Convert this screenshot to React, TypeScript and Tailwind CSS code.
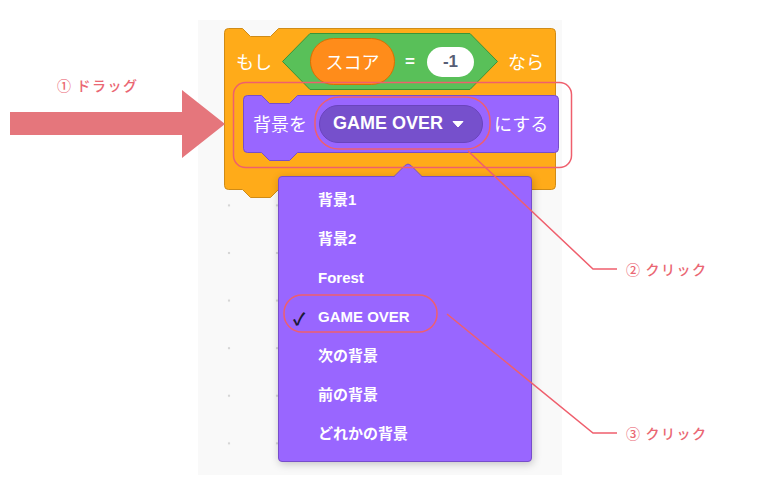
import React from 'react';

const jp = "font-['Noto_Sans_CJK_JP',sans-serif]";
const latin = "font-['Liberation_Sans','Noto_Sans_CJK_JP',sans-serif]";

const menuItems = ['背景1', '背景2', 'Forest', 'GAME OVER', '次の背景', '前の背景', 'どれかの背景'];

// orange "if" C-block and the purple "switch backdrop" block inside it
const BlockShapes: React.FC = () => (
  <svg className="absolute inset-0" width="340" height="172" viewBox="0 0 340 172">
    <path
      d="M0.5,4.5 Q0.5,0.5 4.5,0.5 H18.5 L26.5,8.5 H46.5 L54.5,0.5 H327.5 Q331.5,0.5 331.5,4.5 V157.5 Q331.5,161.5 327.5,161.5 H54.5 L46.5,169.5 H26.5 L18.5,161.5 H4.5 Q0.5,161.5 0.5,157.5 Z"
      fill="#ffab19"
      stroke="#cf8b17"
    />
    <path
      d="M19.5,71.5 Q19.5,67.5 23.5,67.5 H37.5 L45.5,75.5 H65.5 L73.5,67.5 H330.5 Q334.5,67.5 334.5,71.5 V120.5 Q334.5,124.5 330.5,124.5 H73.5 L65.5,132.5 H45.5 L37.5,124.5 H23.5 Q19.5,124.5 19.5,120.5 Z"
      fill="#9966ff"
      stroke="#774dcb"
    />
  </svg>
);

const Condition: React.FC = () => (
  <div className="relative w-[216px] h-[57px] flex items-center pl-[28px] gap-[10px]">
    <svg className="absolute inset-0" width="216" height="57" viewBox="0 0 216 57">
      <polygon points="28,0.5 188,0.5 215.5,28.5 188,56.5 28,56.5 0.5,28.5" fill="#59c059" stroke="#389438" />
    </svg>
    <div className={`relative w-[85px] h-[47px] rounded-full bg-[#ff8c1a] border border-[#db6e00] flex items-center justify-center text-white text-[18px] ${jp}`}>
      スコア
    </div>
    <span className={`relative text-white text-[17px] font-bold ${latin}`}>=</span>
    <div className={`relative ml-[2px] w-[47px] h-[30px] rounded-full bg-white flex items-center justify-center text-[#575e75] text-[17px] font-bold ${latin}`}>
      -1
    </div>
  </div>
);

const BackdropMenu: React.FC = () => (
  <div className="absolute left-[80px] top-[156px] w-[254px] h-[286px] rounded-[4px] bg-[#9966ff] border border-[#774dcb] shadow-[1px_2px_8px_rgba(0,0,0,0.22)] pt-[4px]">
    <svg className="absolute -top-[14px] left-[114px]" width="30" height="15" viewBox="0 0 30 15">
      <path d="M0,15 L12,2.5 Q15,-0.5 18,2.5 L30,15 Z" fill="#9966ff" />
      <path d="M0.5,14 L12,2.5 Q15,-0.5 18,2.5 L29.5,14" fill="none" stroke="#774dcb" />
    </svg>
    {menuItems.map((item) => (
      <div key={item} className="relative h-[39px] flex items-center">
        {item === 'GAME OVER' && (
          <span className={`absolute left-[14px] text-[#1c1a38] text-[17px] font-bold ${jp}`}>✓</span>
        )}
        <span className={`ml-[39px] text-white text-[15px] font-bold ${latin}`}>{item}</span>
      </div>
    ))}
  </div>
);

const Annotations: React.FC = () => (
  <svg className="absolute inset-0 pointer-events-none" width="760" height="482" viewBox="0 0 760 482">
    <polygon points="10,112 182,112 182,90 225,124 182,158 182,135 10,135" fill="#e5767c" />
    <g fill="none" stroke="#ef5f6d" strokeWidth="1.5">
      <rect x="233.5" y="82.5" width="338" height="85" rx="12" />
      <rect x="315" y="97" width="175" height="52" rx="24" />
      <rect x="284" y="295" width="153" height="37" rx="18" />
      <polyline points="468,151 593,269 617,269" />
      <polyline points="447,314 593,433 617,433" />
    </g>
  </svg>
);

const Label: React.FC<{ num: string; text: string; className: string }> = ({ num, text, className }) => (
  <div className={`absolute flex items-center gap-[4px] text-[#ea6773] text-[14px] leading-[20px] tracking-[1.5px] font-medium ${jp} ${className}`}>
    <span>{num}</span>
    <span>{text}</span>
  </div>
);

export default function App() {
  return (
    <div className="relative w-[760px] h-[482px] bg-white overflow-hidden">
      <div className="relative ml-[198px] mt-[20px] w-[364px] h-[455px] bg-[#f9f9f9] bg-[radial-gradient(circle,#d6d6d6_1px,transparent_1.6px)] bg-[length:48px_47.6px] bg-[position:7px_18.8px] pl-[26px] pt-[8px]">
        <div className="relative w-[340px] h-[172px]">
          <BlockShapes />
          <div className="relative flex flex-col">
            <div className={`h-[67px] flex items-center pl-[12px] gap-[10px] text-white text-[18px] ${jp}`}>
              <span>もし</span>
              <Condition />
              <span>なら</span>
            </div>
            <div className={`ml-[19px] h-[57px] flex items-center pl-[10px] text-white text-[18px] ${jp}`}>
              <span>背景を</span>
              <div className="ml-[12px] w-[164px] h-[38px] rounded-full bg-[#7650cc] border border-[#6a44bd] flex items-center pl-[13px]">
                <span className={`text-white text-[18px] font-bold ${latin}`}>GAME OVER</span>
                <svg className="ml-[9px]" width="12" height="8" viewBox="0 0 12 8">
                  <path d="M1,1.5 L11,1.5 L6,7 Z" fill="white" stroke="white" strokeLinejoin="round" />
                </svg>
              </div>
              <span className="ml-[11px]">にする</span>
            </div>
          </div>
        </div>
        <BackdropMenu />
      </div>

      <Annotations />
      <Label num="①" text="ドラッグ" className="left-[57px] top-[75px]" />
      <Label num="②" text="クリック" className="left-[626px] top-[259px]" />
      <Label num="③" text="クリック" className="left-[626px] top-[423px]" />
    </div>
  );
}
